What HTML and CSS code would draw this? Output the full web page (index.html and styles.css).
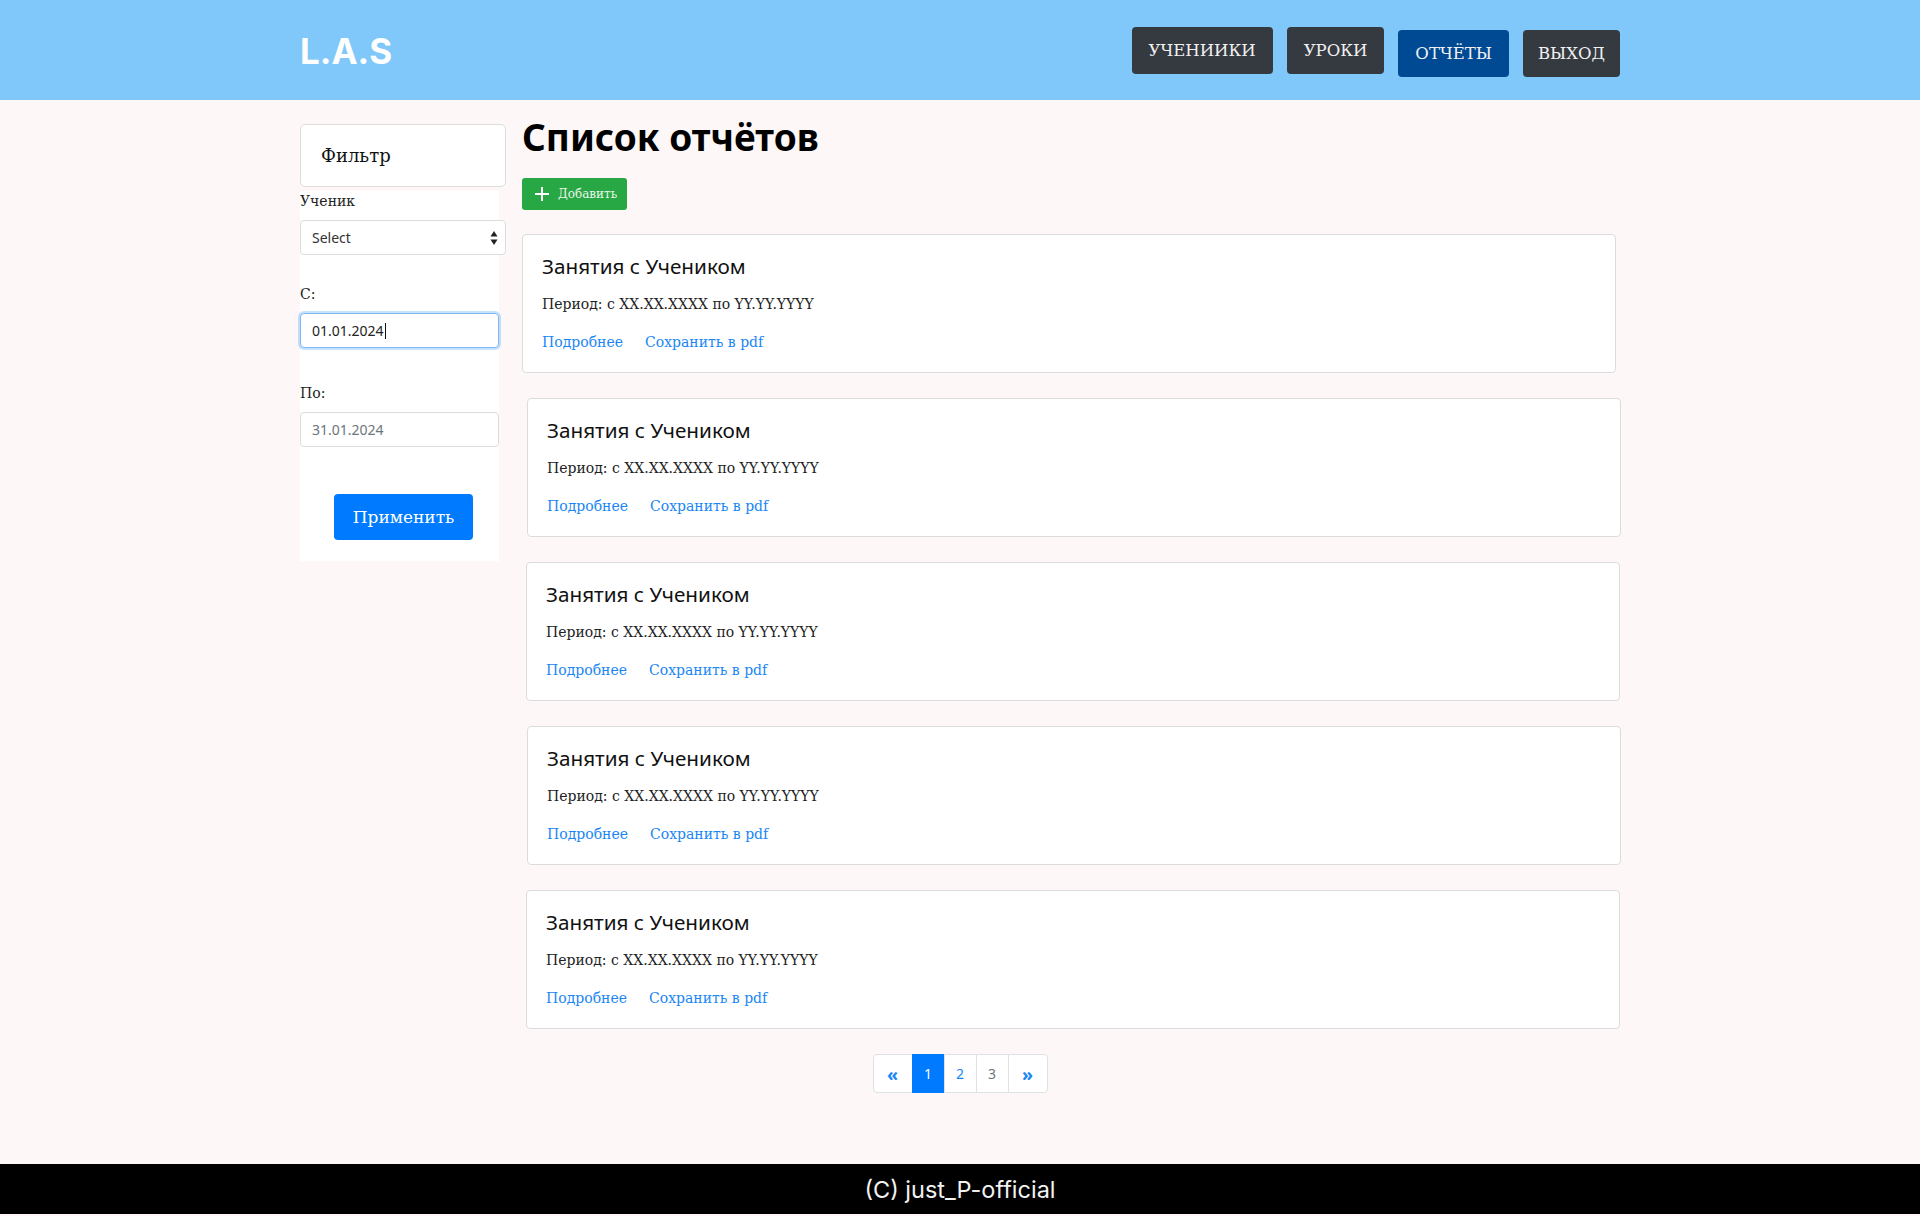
FILE: index.html
```html
<!DOCTYPE html>
<html lang="ru">
<head>
<meta charset="utf-8">
<title>L.A.S — Список отчётов</title>
<link rel="stylesheet" href="styles.css">
</head>
<body>
<header class="topbar">
  <div class="topbar__inner">
    <div class="logo">L.A.S</div>
    <nav class="nav">
      <a class="nav__btn" href="#">УЧЕНИИКИ</a>
      <a class="nav__btn" href="#">УРОКИ</a>
      <a class="nav__btn nav__btn--active nav__btn--low" href="#">ОТЧЁТЫ</a>
      <a class="nav__btn nav__btn--low nav__btn--narrow" href="#">ВЫХОД</a>
    </nav>
  </div>
</header>

<main class="page">
  <div class="layout">
    <aside class="sidebar">
      <div class="filter-head">Фильтр</div>
      <div class="filter-body">
        <div class="field-label">Ученик</div>
        <div class="select">
          <span>Select</span>
          <svg class="select__arrows" width="8" height="16" viewBox="0 0 8 16"><path d="M4 1 L7.5 6.5 L0.5 6.5 Z" fill="#222"/><path d="M4 15 L7.5 9.5 L0.5 9.5 Z" fill="#222"/></svg>
        </div>
        <div class="field-label field-label--spaced">С:</div>
        <div class="input input--focus"><span>01.01.2024</span><span class="caret"></span></div>
        <div class="field-label field-label--spaced2">По:</div>
        <div class="input input--muted"><span>31.01.2024</span></div>
        <button class="apply-btn">Применить</button>
      </div>
    </aside>

    <section class="content">
      <h1 class="title">Список отчётов</h1>
      <button class="add-btn">
        <svg width="16" height="16" viewBox="0 0 16 16"><path d="M8 1 V15 M1 8 H15" stroke="#fff" stroke-width="2"/></svg>
        <span>Добавить</span>
      </button>

      <div class="cards">
        <article class="card">
          <h2 class="card__title">Занятия с Учеником</h2>
          <p class="card__period">Период: с XX.XX.XXXX по YY.YY.YYYY</p>
          <div class="card__links"><a href="#">Подробнее</a><a href="#">Сохранить в pdf</a></div>
        </article>
        <article class="card card--shift5">
          <h2 class="card__title">Занятия с Учеником</h2>
          <p class="card__period">Период: с XX.XX.XXXX по YY.YY.YYYY</p>
          <div class="card__links"><a href="#">Подробнее</a><a href="#">Сохранить в pdf</a></div>
        </article>
        <article class="card card--shift4">
          <h2 class="card__title">Занятия с Учеником</h2>
          <p class="card__period">Период: с XX.XX.XXXX по YY.YY.YYYY</p>
          <div class="card__links"><a href="#">Подробнее</a><a href="#">Сохранить в pdf</a></div>
        </article>
        <article class="card card--shift5">
          <h2 class="card__title">Занятия с Учеником</h2>
          <p class="card__period">Период: с XX.XX.XXXX по YY.YY.YYYY</p>
          <div class="card__links"><a href="#">Подробнее</a><a href="#">Сохранить в pdf</a></div>
        </article>
        <article class="card card--shift4">
          <h2 class="card__title">Занятия с Учеником</h2>
          <p class="card__period">Период: с XX.XX.XXXX по YY.YY.YYYY</p>
          <div class="card__links"><a href="#">Подробнее</a><a href="#">Сохранить в pdf</a></div>
        </article>
      </div>
    </section>
  </div>

  <nav class="pager">
    <a class="pager__item pager__item--arrow" href="#">«</a>
    <a class="pager__item pager__item--active" href="#">1</a>
    <a class="pager__item" href="#">2</a>
    <a class="pager__item pager__item--muted" href="#">3</a>
    <a class="pager__item pager__item--arrow" href="#">»</a>
  </nav>
</main>

<footer class="footer">(C) just_P-official</footer>
</body>
</html>
```

FILE: styles.css
```css
* { box-sizing: border-box; }

html, body {
  margin: 0;
  padding: 0;
}

body {
  background: #fdf8f7;
  font-family: "DejaVu Serif", "Liberation Serif", serif;
  color: #222;
}

a { text-decoration: none; }

/* Header */
.topbar {
  background: #80c8fa;
  height: 100px;
}

.topbar__inner {
  width: 1320px;
  margin: 0 auto;
  height: 100%;
  display: flex;
  align-items: center;
  justify-content: space-between;
}

.logo {
  font-family: Inter, "Noto Sans", sans-serif;
  font-weight: 700;
  font-size: 35px;
  color: #fff;
  margin-top: 2px;
}

.nav {
  display: flex;
  gap: 14px;
  align-items: flex-start;
  padding-top: 4px;
}

.nav__btn {
  display: flex;
  align-items: center;
  height: 47px;
  padding: 0 17px;
  background: #343a40;
  color: #f1f1f1;
  border-radius: 4px;
  font-size: 16.5px;
}

.nav__btn--low { margin-top: 3px; }

.nav__btn--narrow { padding: 0 15px; }

.nav__btn--active { background: #004a94; }

/* Layout */
.page {
  width: 1320px;
  margin: 0 auto;
  padding-top: 15px;
  padding-bottom: 71px;
}

.layout {
  display: flex;
  align-items: flex-start;
  gap: 16px;
}

/* Sidebar */
.sidebar {
  width: 206px;
  flex: none;
  margin-top: 9px;
}

.filter-head {
  height: 63px;
  background: #fff;
  border: 1px solid #dcdcdc;
  border-radius: 5px;
  padding-left: 20px;
  display: flex;
  align-items: center;
  font-size: 18px;
  color: #111;
}

.filter-body {
  width: 199px;
  background: #fff;
  padding-bottom: 21px;
}

.field-label {
  font-size: 14px;
  line-height: 20px;
  margin: 4px 0 9px;
  color: #222;
}

.field-label--spaced { margin-top: 29px; }
.field-label--spaced2 { margin-top: 35px; }

.select {
  width: 206px;
  height: 35px;
  border: 1px solid #dcdcdc;
  border-radius: 4px;
  background: #fff;
  display: flex;
  align-items: center;
  justify-content: space-between;
  padding: 0 7px 0 11px;
  font-family: "Noto Sans", "Open Sans", sans-serif;
  font-size: 14px;
  color: #333;
}

.input {
  width: 199px;
  height: 35px;
  border: 1px solid #dcdcdc;
  border-radius: 4px;
  background: #fff;
  display: flex;
  align-items: center;
  padding: 0 11px;
  font-family: "Noto Sans", "Open Sans", sans-serif;
  font-size: 14px;
  color: #222;
}

.input--focus {
  border-color: #7db8f5;
  box-shadow: 0 0 0 2px rgba(0, 123, 255, 0.22);
}

.input--muted { color: #6c757d; }

.caret {
  display: inline-block;
  width: 1px;
  height: 16px;
  background: #111;
  margin-left: 1px;
}

.apply-btn {
  display: block;
  margin: 47px 0 0 34px;
  width: 139px;
  height: 46px;
  border: none;
  border-radius: 4px;
  background: #007bff;
  color: #fff;
  font-family: "DejaVu Serif", "Liberation Serif", serif;
  font-size: 17px;
}

/* Content */
.content {
  flex: 1;
  min-width: 0;
}

.title {
  margin: 0;
  font-family: "Noto Sans", "Open Sans", sans-serif;
  font-weight: 700;
  font-size: 37px;
  line-height: 44px;
  color: #000;
}

.add-btn {
  margin-top: 19px;
  display: flex;
  align-items: center;
  gap: 8px;
  width: 105px;
  height: 32px;
  padding: 0 0 0 12px;
  border: none;
  border-radius: 3px;
  background: #28a745;
  color: #eaf6ea;
  font-family: "DejaVu Serif", "Liberation Serif", serif;
  font-size: 12px;
}

.cards {
  margin-top: 24px;
  display: flex;
  flex-direction: column;
  gap: 25px;
}

.card {
  width: 1094px;
  background: #fff;
  border: 1px solid #dcdcdc;
  border-radius: 4px;
  padding: 19px 19px 20px;
}

.card--shift5 { margin-left: 5px; }
.card--shift4 { margin-left: 4px; }

.card__title {
  margin: 0 0 15px;
  font-family: "Noto Sans", "Open Sans", sans-serif;
  font-weight: 400;
  font-size: 20.7px;
  line-height: 25px;
  color: #111;
}

.card__period {
  margin: 0 0 18px;
  font-size: 14px;
  line-height: 20px;
  color: #222;
}

.card__links {
  display: flex;
  gap: 22px;
  font-size: 14px;
  line-height: 20px;
}

.card__links a { color: #1a86f5; }

/* Pagination */
.pager {
  margin-top: 25px;
  display: flex;
  justify-content: center;
}

.pager__item {
  height: 39px;
  width: 33px;
  display: flex;
  align-items: center;
  justify-content: center;
  background: #fff;
  border: 1px solid #dee2e6;
  margin-left: -1px;
  font-family: "Noto Sans", "Open Sans", sans-serif;
  font-size: 14px;
  color: #1a86f5;
}

.pager__item:first-child {
  margin-left: 0;
  border-radius: 4px 0 0 4px;
}

.pager__item:last-child { border-radius: 0 4px 4px 0; }

.pager__item--arrow {
  width: 40px;
  font-weight: 700;
  font-size: 18px;
}

.pager__item--active {
  background: #007bff;
  border-color: #007bff;
  color: #fff;
}

.pager__item--muted { color: #6c757d; }

/* Footer */
.footer {
  height: 50px;
  margin-bottom: 2px;
  background: #000;
  color: #f2f2f2;
  display: flex;
  align-items: center;
  justify-content: center;
  font-family: Inter, "Noto Sans", sans-serif;
  font-size: 23.5px;
}
```
